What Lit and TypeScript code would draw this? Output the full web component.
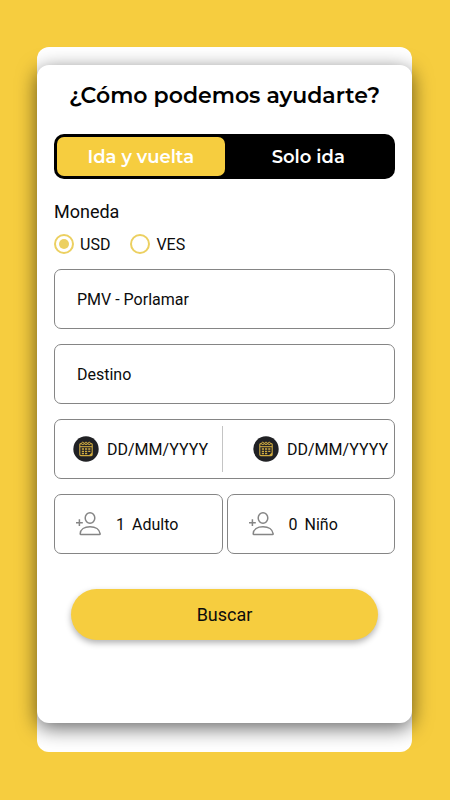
import { LitElement, html, css } from "lit";
import { customElement, property, state } from "lit/decorators.js";

@customElement("calendar-badge")
class CalendarBadge extends LitElement {
  static styles = css`
    :host { display: block; flex: none; width: 26px; height: 26px; }
    svg { display: block; width: 100%; height: 100%; }
  `;
  render() {
    return html`<svg viewBox="0 0 26 26" aria-hidden="true">
      <circle cx="13" cy="13" r="12.7" fill="#202124" />
      <g fill="none" stroke="#cfab40" stroke-width="1.1">
        <rect x="6.8" y="7.6" width="12.4" height="12" rx="1" />
        <path d="M6.8 10.7h12.4" />
        <path d="M8.800 13h8.600M8.800 15.300h8.600M8.800 17.500h5.500" stroke-width="1.3" stroke-dasharray="2.200 1" />
      </g>
      <g fill="#202124" stroke="#cfab40">
        <circle cx="9.800" cy="7.400" r="1.200" />
        <circle cx="13" cy="7.400" r="1.200" />
        <circle cx="16.200" cy="7.400" r="1.200" />
      </g>
      <path d="M15.600 19.400l3.400-3v3z" fill="#cfab40" />
    </svg>`;
  }
}

@customElement("add-person-icon")
class AddPersonIcon extends LitElement {
  static styles = css`
    :host { display: block; flex: none; width: 26px; height: 26px; }
    svg { display: block; width: 100%; height: 100%; }
  `;
  render() {
    return html`<svg viewBox="0 0 26 26" fill="none" stroke="#858585" stroke-width="1.5" aria-hidden="true">
      <path d="M0 11.700h6.800M3.400 8.300v6.800" />
      <ellipse cx="14" cy="7" rx="4.800" ry="5.200" />
      <path d="M5 23.600H23.400c.500 0 .8-.3.8-.8C23.600 18.400 19.500 15.700 14 15.700S4.400 18.400 4.200 22.800c0 .500.300.8.800.8z" />
    </svg>`;
  }
}

@customElement("app-root")
class AppRoot extends LitElement {
  @property() trip = "round";
  @state() currency = "USD";
  @state() adults = 1;
  @state() minors = 0;

  static styles = css`
    :host {
      display: block;
      box-sizing: border-box;
      min-height: 100vh;
      padding: 47px 38px 48px 37px;
      background: #f6cd3f;
      color: #0c0c0c;
      font-family: Roboto, "Liberation Sans", sans-serif;
      font-size: 16px;
    }
    * { box-sizing: border-box; }
    button, input { font: inherit; color: inherit; }
    button { cursor: pointer; padding: 0; border: 0; background: none; }
    .sheet { padding: 18px 0 29px; border-radius: 12px; background: #fff; }
    .card {
      padding: 16px 17px 83px;
      border-radius: 12px;
      background: #fff;
      box-shadow: 0 5px 20px rgba(0, 0, 0, 0.6);
    }
    h1 {
      margin: 0 0 24px;
      font: 600 22px/29px Montserrat, Inter, sans-serif;
      text-align: center;
      white-space: nowrap;
      color: #000;
    }
    .trip {
      display: grid;
      grid-template-columns: 1fr 1fr;
      height: 45px;
      padding: 3px;
      border-radius: 10px;
      background: #000;
    }
    .trip button {
      border-radius: 7px;
      font: 600 18px/22px Montserrat, Inter, sans-serif;
      color: #fff;
    }
    .trip .on { background: #f6cd3f; }
    fieldset { margin: 0; padding: 0; border: 0; min-width: 0; }
    legend { padding: 22px 0 0; font-size: 18px; line-height: 22px; }
    .currencies { display: flex; gap: 20px; padding: 11px 0 15px; }
    .currencies label { display: flex; align-items: center; gap: 6px; height: 20px; }
    input[type="radio"] {
      appearance: none;
      display: grid;
      place-items: center;
      width: 20px;
      height: 20px;
      margin: 0;
      border: 2px solid #ecd061;
      border-radius: 50%;
    }
    input[type="radio"]:checked::before {
      content: "";
      width: 10px;
      height: 10px;
      border-radius: 50%;
      background: #ecd061;
    }
    .fields { display: grid; gap: 15px; }
    .box {
      width: 100%;
      height: 60px;
      border: 1px solid #858585;
      border-radius: 7px;
      background: #fff;
    }
    .place { padding: 0 22px; }
    input::placeholder { color: inherit; opacity: 1; }
    .dates { display: grid; grid-template-columns: 168px 1fr; }
    .date { display: flex; align-items: center; gap: 8px; padding-left: 18px; min-width: 0; }
    .date + .date { padding-left: 30px; }
    .date:first-child {
      margin: 6px 0;
      border-right: 1px solid #c4c4c4;
    }
    .date input { flex: 1; min-width: 0; width: 0; padding: 0; border: 0; background: none; }
    .people { display: grid; grid-template-columns: 1fr 1fr; gap: 4px; }
    .people button { display: flex; align-items: center; padding-left: 21px; }
    .count { margin: 0 7px 0 14px; }
    .search {
      display: block;
      width: calc(100% - 34px);
      height: 51px;
      margin: 35px 17px 0;
      border-radius: 26px;
      background: #f6cd3f;
      font-size: 18px;
      box-shadow: 0 3px 6px rgba(0, 0, 0, 0.3);
    }
  `;

  private option(code: string) {
    return html`<label><input type="radio" name="currency" .checked=${this.currency === code}
      @change=${() => (this.currency = code)} />${code}</label>`;
  }

  private date(label: string) {
    return html`<label class="date"><calendar-badge></calendar-badge>
      <input type="text" placeholder="DD/MM/YYYY" aria-label=${label} /></label>`;
  }

  render() {
    return html`<main class="sheet">
      <section class="card">
        <h1>¿Cómo podemos ayudarte?</h1>
        <div class="trip">
          <button class=${this.trip === "round" ? "on" : ""} @click=${() => (this.trip = "round")}>Ida y vuelta</button>
          <button class=${this.trip === "single" ? "on" : ""} @click=${() => (this.trip = "single")}>Solo ida</button>
        </div>
        <fieldset>
          <legend>Moneda</legend>
          <div class="currencies">${this.option("USD")}${this.option("VES")}</div>
        </fieldset>
        <div class="fields">
          <input class="box place" type="text" aria-label="Origen" value="PMV - Porlamar" />
          <input class="box place" type="text" aria-label="Destino" placeholder="Destino" />
          <div class="box dates">${this.date("Fecha de ida")}${this.date("Fecha de vuelta")}</div>
          <div class="people">
            <button class="box" @click=${() => this.adults++}>
              <add-person-icon></add-person-icon><span class="count">${this.adults}</span><span>Adulto</span>
            </button>
            <button class="box" @click=${() => this.minors++}>
              <add-person-icon></add-person-icon><span class="count">${this.minors}</span><span>Niño</span>
            </button>
          </div>
        </div>
        <button class="search">Buscar</button>
      </section>
    </main>`;
  }
}
